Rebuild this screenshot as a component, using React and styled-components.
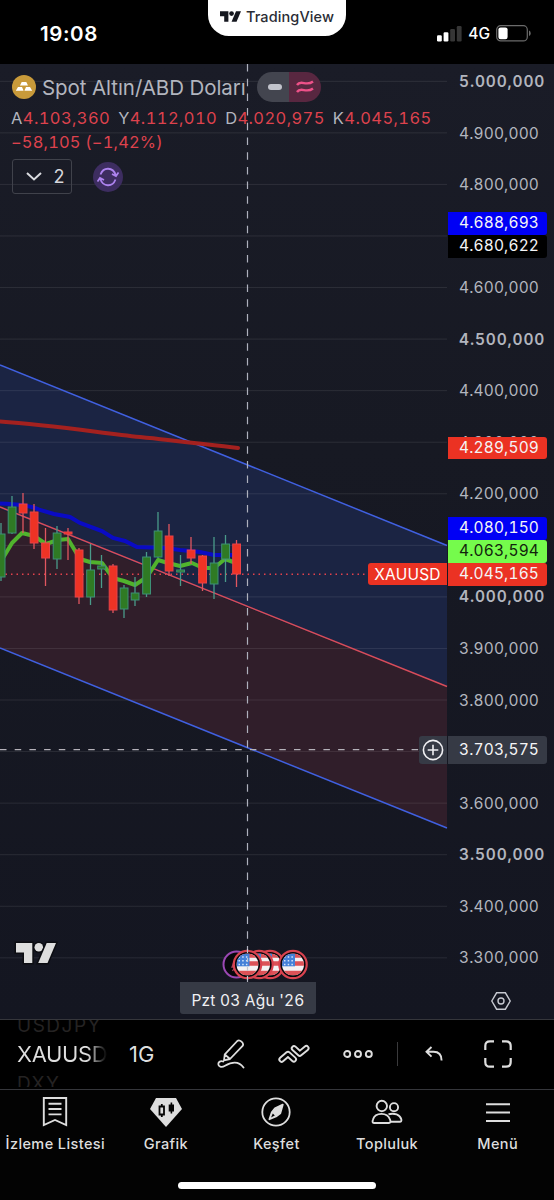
import React from 'react';
import styled, { createGlobalStyle } from 'styled-components';

const GlobalStyle = createGlobalStyle`
  * {
    box-sizing: border-box;
  }

  body {
    margin: 0;
    background: #000;
    font-family: Inter, 'Liberation Sans', sans-serif;
    overflow: hidden;
  }

  svg {
    display: block;
    flex: none;
  }
`;

const STEP = 51.56;

// an empty row is one whose label is fully hidden by price tags
const PRICES = [
    '5.000,000', '4.900,000', '4.800,000', '', '4.600,000', '4.500,000',
    '4.400,000', '4.300,000', '4.200,000', '', '4.000,000', '3.900,000',
    '3.800,000', '', '3.600,000', '3.500,000', '3.400,000', '3.300,000',
];

const BOLD_PRICES = ['5.000,000', '4.500,000', '4.000,000', '3.500,000'];

const TAGS = [
    { text: '4.688,693', top: 148, color: '#0000f5' },
    { text: '4.680,622', top: 171, color: '#000' },
    { text: '4.289,509', top: 372.5, color: '#eb3223' },
    { text: '4.080,150', top: 453, color: '#0000f5' },
    { text: '4.063,594', top: 476, color: '#75fb4c', ink: '#12240c' },
    { text: '4.045,165', top: 499, color: '#eb3223' },
];

// x, high, body top, body bottom, low, rising
const CANDLES = [
    [1, 523, 534, 577, 581, 1],
    [12, 496, 507, 533, 534, 1],
    [23, 493, 504, 513, 533, 0],
    [34, 504, 512, 543, 549, 0],
    [45.5, 528, 543, 558, 586, 0],
    [57, 526, 533, 559, 569, 1],
    [68, 528, 532, 534, 560, 0],
    [79, 548, 550, 597, 604, 0],
    [90.5, 544, 570, 597, 605, 1],
    [101.5, 555, 566, 569, 588, 1],
    [113, 564, 566, 610, 613, 0],
    [124, 585, 588, 609, 618, 1],
    [135, 577, 593, 600, 606, 1],
    [146.5, 552, 557, 594, 597, 1],
    [158, 512, 531, 557, 558, 1],
    [169, 524, 536, 571, 576, 0],
    [180.5, 555, 570, 572, 586, 1],
    [191, 537, 550, 558, 564, 0],
    [202.5, 555, 556, 583, 591, 0],
    [214, 537, 563, 584, 599, 1],
    [225.5, 535, 544, 559, 582, 1],
    [236.5, 540, 544, 574, 587, 0],
];

const Candle = ({ data }) => {
    const [x, high, top, bottom, low, up] = data;
    return (
        <g>
            <path d={`M${x} ${high}V${low}`} stroke={up ? '#4a9b8a' : '#e15660'} strokeWidth="1.3" />
            <rect
                x={x - 3.8}
                y={top}
                width="7.8"
                height={bottom - top}
                fill={up ? '#2f7a24' : '#ee3325'}
                stroke={up ? '#3d9077' : '#e94248'}
            />
        </g>
    );
};

const PlotArea = () => (
    <svg width="448" height="955" viewBox="0 64 448 955">
        <path d="M0 365L447 545V687L0 509Z" fill="#1b2443" />
        <path d="M0 509L447 687V828L0 648Z" fill="#301e2a" />
        {PRICES.map((price, i) => (
            <path key={i} d={`M0 ${81.3 + i * STEP}H447`} stroke="#fff" strokeOpacity="0.09" />
        ))}
        <path d="M0 365L447 545.5" stroke="#4060e0" strokeWidth="1.5" />
        <path d="M0 648L447 828" stroke="#4060e0" strokeWidth="1.5" />
        <path d="M0 507L447 686.5" stroke="#d84c5a" strokeWidth="1.5" />
        <path d="M0 574.2H368" stroke="#e4424c" strokeWidth="1.4" strokeDasharray="1.5 4" />
        <path d="M0 503.5C22 504 34 507 40 510L54 514L70 517L80 523L102 531L113 538L125 541L137 547L165 548L180 550L200 552L214 555H236" fill="none" stroke="#0a0bc4" strokeWidth="4" />
        <path d="M0 563L12 543L22 533L34 536L46 544L58 540L68 539L80 559L90 562L102 563L113 578L124 581L135 585L147 577L158 560L168 563L180 566L192 563L203 568L214 568L225 559L236 563" fill="none" stroke="#50b32d" strokeWidth="4" strokeLinejoin="round" />
        {CANDLES.map((candle) => (
            <Candle key={candle[0]} data={candle} />
        ))}
        <path d="M0 421.5C50 425 95 432 140 437C180 441 210 445 238 448" fill="none" stroke="#a4211f" strokeWidth="4" strokeLinecap="round" />
        <path d="M0 749.7H420" stroke="#b5b2ba" strokeWidth="1.3" strokeDasharray="6.5 8.2" />
        <path d="M247.5 64V982" stroke="#aeb1bd" strokeWidth="1.2" strokeDasharray="7.5 7.2" />
        <g transform="translate(16 943)" fill="#dedede" stroke="#0c0d12" strokeWidth="3" paintOrder="stroke">
            <path d="M0 0H16.3V20H8V9.5H0Z" />
            <circle cx="22.8" cy="4.3" r="4.3" />
            <path d="M30.7 0H40L31.5 20H22.2Z" />
        </g>
    </svg>
);

const Flag = ({ x }) => (
    <g transform={`translate(${x} 15.5)`}>
        <circle r="13.7" fill="#08080c" stroke="#d9434f" strokeWidth="2.2" />
        <g clipPath="url(#flagClip)">
            <rect x="-11" y="-11" width="22" height="22" fill="#f4f2f3" />
            <path d="M-11 -9H11M-11 -1H11M-11 8.5H11" stroke="#dc5257" strokeWidth="4.4" />
            <rect x="-11" y="-11" width="13" height="12.8" fill="#4480d8" />
            <path d="M-9 -7.5H2M-9 -3.8H2M-9 0H2" stroke="#d6e5fa" strokeWidth="1.5" strokeDasharray="1.5 2.2" />
        </g>
    </g>
);

const Events = () => (
    <svg width="88" height="31" viewBox="0 0 88 31">
        <clipPath id="flagClip"><circle r="11" /></clipPath>
        <circle cx="15.5" cy="15.5" r="13" fill="#08080c" stroke="#9a48b3" strokeWidth="2" />
        <path d="M12.5 14L11 18H14L11.5 22" fill="none" stroke="#a8445e" strokeWidth="1.3" />
        <Flag x={49} />
        <Flag x={38} />
        <Flag x={26.5} />
        <Flag x={72} />
        <path d="M26.5 0V31" stroke="#c3c6d0" strokeWidth="1.2" strokeDasharray="4 5" />
    </svg>
);

const App = () => (
    <Screen>
        <GlobalStyle />
        <StatusBar>
            <Clock>19:08</Clock>
            <Island>
                <svg width="21" height="11" viewBox="0 0 40 20" fill="#15171f">
                    <path d="M0 0H16V20H8V9.5H0Z" />
                    <circle cx="22" cy="4.5" r="4.5" />
                    <path d="M30.5 0H40L31.5 20H22Z" />
                </svg>
                TradingView
            </Island>
            <Signal>
                <svg width="25" height="16" viewBox="0 0 25 16" fill="#fff">
                    <rect x="0" y="9.3" width="4.8" height="6.2" rx="1.2" />
                    <rect x="6.6" y="6.3" width="4.8" height="9.2" rx="1.2" />
                    <rect x="13.2" y="3" width="4.8" height="12.5" rx="1.2" fill="#363636" />
                    <rect x="19.8" y="0" width="4.8" height="15.5" rx="1.2" fill="#363636" />
                </svg>
                <span>4G</span>
                <svg width="35" height="17" viewBox="0 0 35 17">
                    <rect x="0.7" y="0.7" width="30.6" height="15.2" rx="4" fill="none" stroke="#6b6b6b" strokeWidth="1.2" />
                    <rect x="2.4" y="2.4" width="9.2" height="11.8" rx="2.2" fill="#fff" />
                    <path d="M33 5.5C35.2 6.3 35.2 10.3 33 11.1Z" fill="#6b6b6b" />
                </svg>
            </Signal>
        </StatusBar>

        <Chart>
            <Plot>
                <PlotArea />
                <Legend>
                    <SymbolRow>
                        <svg width="24" height="24" viewBox="0 0 24 24">
                            <circle cx="12" cy="12" r="12" fill="#c89a3a" />
                            <path d="M9.7 7H14.3L16 10.5H8ZM6 12H10L11.6 15.8H3.8ZM14 12H18L20.2 15.8H12.4Z" fill="#fff" />
                        </svg>
                        <SymbolName>Spot Altın/ABD Doları</SymbolName>
                        <Pills>
                            <Pill $color="#43454f"><Dash /></Pill>
                            <Pill $color="#582740">
                                <svg width="18" height="14" viewBox="0 0 18 14" fill="none" stroke="#ee5189" strokeWidth="2.4">
                                    <path d="M1 5C5 -1 10 7 17 1.5M1 12C5 6 10 14 17 8.5" />
                                </svg>
                            </Pill>
                        </Pills>
                    </SymbolRow>
                    <Quotes>
                        <Quote>A<b>4.103,360</b></Quote>
                        <Quote>Y<b>4.112,010</b></Quote>
                        <Quote>D<b>4.020,975</b></Quote>
                        <Quote>K<b>4.045,165</b></Quote>
                    </Quotes>
                    <Change>−58,105 (−1,42%)</Change>
                    <Controls>
                        <Collapse>
                            <svg width="16" height="9" viewBox="0 0 16 9" fill="none" stroke="#dadbe0" strokeWidth="2">
                                <path d="M1 1L8 7.5L15 1" />
                            </svg>
                            2
                        </Collapse>
                        <Refresh>
                            <svg width="22" height="20" viewBox="0 0 22 20" fill="none" stroke="#ad83ee" strokeWidth="1.8">
                                <path d="M3.5 7.5C6.5 -0.5 16 0 18.7 8M18.5 12.5C15.5 20.5 6 20 3.3 12M15 7L19 9L21.5 5.5M7 13L3 11L0.5 14.5" />
                            </svg>
                        </Refresh>
                    </Controls>
                </Legend>
                <EventStrip><Events /></EventStrip>
                <DateTag>Pzt 03 Ağu '26</DateTag>
                <SymbolTag>XAUUSD</SymbolTag>
                <AddTag>
                    <svg width="22" height="22" viewBox="0 0 22 22" fill="none" stroke="#f0f0f3" strokeWidth="1.6">
                        <circle cx="11" cy="11" r="9.6" />
                        <path d="M11 5.7V16.3M5.7 11H16.3" />
                    </svg>
                </AddTag>
            </Plot>
            <Scale>
                {PRICES.map((price, i) => (
                    <Price key={i} $bold={BOLD_PRICES.includes(price)}>{price}</Price>
                ))}
                {TAGS.map((tag) => (
                    <PriceTag key={tag.text} $top={tag.top} $color={tag.color} $ink={tag.ink}>
                        {tag.text}
                    </PriceTag>
                ))}
                <PriceTag $top={672} $height={28} $color="#363a45">3.703,575</PriceTag>
                <Settings>
                    <svg width="20" height="18" viewBox="0 0 20 18" fill="none" stroke="#c7c9d1" strokeWidth="1.4">
                        <path d="M5.6 0.8H14.4L19.2 9L14.4 17.2H5.6L0.8 9Z" />
                        <circle cx="10" cy="9" r="3" />
                    </svg>
                </Settings>
            </Scale>
        </Chart>

        <Toolbar>
            <Picker>
                <Ghost>USDJPY</Ghost>
                <Current>XAUUSD</Current>
                <Ghost>DXY</Ghost>
            </Picker>
            <Interval>1G</Interval>
            <Tool $width={76}>
                <svg width="28" height="30" viewBox="0 0 28 30" fill="none" stroke="#dedede" strokeWidth="1.8" strokeLinejoin="round" strokeLinecap="round">
                    <path d="M7 21.3L7.8 15.3L20.3 2C22.6 0 27.5 4.2 25.6 6.9L13 20L7 21.3ZM7.8 15.3L13 20M6.2 22.5C3.6 21.6 1.3 22.8 1.3 25C1.3 27.5 4.3 29 8 26.8C14.5 23 21.5 21.5 26.5 28.6" />
                </svg>
            </Tool>
            <Tool $width={50}>
                <svg width="32" height="20" viewBox="0 0 32 20" fill="none" strokeLinejoin="round" strokeLinecap="round">
                    <path d="M3.6 15.5L10 10L15.8 15.3" stroke="#dedede" strokeWidth="6.4" />
                    <path d="M3.6 15.5L10 10L15.8 15.3" stroke="#000" strokeWidth="2.6" />
                    <path d="M16 4.3L21.8 9.6L28.3 4.2" stroke="#dedede" strokeWidth="6.4" />
                    <path d="M16 4.3L21.8 9.6L28.3 4.2" stroke="#000" strokeWidth="2.6" />
                </svg>
            </Tool>
            <Tool $width={78}>
                <svg width="30" height="10" viewBox="0 0 30 10" fill="none" stroke="#dedede" strokeWidth="1.9">
                    <circle cx="4.2" cy="5" r="3" />
                    <circle cx="15" cy="5" r="3" />
                    <circle cx="25.8" cy="5" r="3" />
                </svg>
            </Tool>
            <Separator />
            <Tool $width={71}>
                <svg width="18" height="16" viewBox="0 0 18 16" fill="none" stroke="#dedede" strokeWidth="1.9">
                    <path d="M6.5 1L1.5 5.8L6.5 10.6M1.5 5.8H8.5C14 5.8 16.6 8.3 16.6 14.5" />
                </svg>
            </Tool>
            <Tool $width={58}>
                <svg width="28" height="28" viewBox="0 0 28 28" fill="none" stroke="#dedede" strokeWidth="2.2">
                    <path d="M10 1.3H6Q1.3 1.3 1.3 6V10M18 1.3H22Q26.7 1.3 26.7 6V10M26.7 18V22Q26.7 26.7 22 26.7H18M10 26.7H6Q1.3 26.7 1.3 22V18" />
                </svg>
            </Tool>
        </Toolbar>

        <Nav>
            <NavItem>
                <svg width="28" height="32" viewBox="0 0 28 32" fill="none" stroke="#dedede" strokeWidth="1.9">
                    <path d="M2.8 3H25.2V30L14 25L2.8 30ZM7.5 8.8H20.5M7.5 14H20.5M7.5 19.4H20.5" />
                </svg>
                İzleme Listesi
            </NavItem>
            <NavItem>
                <svg width="32" height="32" viewBox="0 0 32 32">
                    <path d="M6 3H26L32 14L16 32L0 14Z" fill="#dedede" />
                    <path d="M9.5 11.5H14V19.5H9.5ZM11.8 9V11.5M11.8 19.5V22" fill="none" stroke="#050505" strokeWidth="1.8" />
                    <path d="M18.7 9.5H24V16.5H18.7ZM20.6 7.5H22.2V18.5H20.6Z" fill="#050505" />
                </svg>
                Grafik
            </NavItem>
            <NavItem>
                <svg width="32" height="32" viewBox="0 0 32 32" fill="none" stroke="#dedede" strokeWidth="1.8">
                    <circle cx="16" cy="17" r="13.7" />
                    <path d="M22.8 9.6L20.3 18.2L16 21.5L9.4 24.2L11.8 17.4L15 13.2Z" fill="#dedede" strokeLinejoin="round" />
                    <path d="M12.8 18.5L14.8 20.6L11 22.6Z" fill="#030303" stroke="none" />
                </svg>
                Keşfet
            </NavItem>
            <NavItem>
                <svg width="32" height="32" viewBox="0 0 32 32" fill="none" stroke="#dedede" strokeWidth="1.9">
                    <circle cx="10.8" cy="11" r="5.2" />
                    <circle cx="23" cy="12.2" r="4.1" />
                    <path d="M3 28H17.8C19.6 28 19.8 26.5 19 24.5C17.5 20.5 14 18.9 10.5 18.9S3.2 20.5 2 24.5C1.3 26.5 1.3 28 3 28Z" />
                    <path d="M17.5 19.2C23.5 17.8 29 19.6 30.3 24.3C30.7 26 30 26.8 28.8 26.8H20" />
                </svg>
                Topluluk
            </NavItem>
            <NavItem>
                <svg width="26" height="32" viewBox="0 0 26 32" stroke="#dedede" strokeWidth="2">
                    <path d="M1 9.3H25M1 17.6H25M1 25.9H25" />
                </svg>
                Menü
            </NavItem>
        </Nav>
        <HomeArea><HomeBar /></HomeArea>
    </Screen>
);

const Screen = styled.div`
  display: flex;
  flex-direction: column;
  width: 554px;
  height: 1200px;
  background: #000;
  color: #dedede;
`;

const StatusBar = styled.header`
  display: grid;
  grid-template-columns: 208px 138px 1fr;
  height: 64px;
  color: #fff;
`;

const Clock = styled.div`
  padding: 21px 0 0 40px;
  font-size: 20.5px;
  line-height: 26px;
  font-weight: 600;
  letter-spacing: 0.6px;
`;

const Island = styled.div`
  display: flex;
  align-items: center;
  justify-content: center;
  gap: 5px;
  height: 36px;
  padding-bottom: 4px;
  background: #fff;
  border-radius: 0 0 21px 21px;
  color: #2a2c35;
  font-size: 14.5px;
  font-weight: 500;
  letter-spacing: 0.1px;
`;

const Signal = styled.div`
  display: flex;
  justify-content: flex-end;
  align-items: center;
  gap: 6px;
  height: 25px;
  margin-top: 21px;
  padding-right: 23px;
  font-size: 15.5px;
  font-weight: 500;
`;

const Chart = styled.main`
  display: grid;
  grid-template-columns: 448px 106px;
  height: 955px;
  background: linear-gradient(#1a1c27, #171923 40%, #141621);
  font-variant-numeric: tabular-nums;
`;

const Plot = styled.section`
  position: relative;
`;

const Legend = styled.div`
  position: absolute;
  top: 8px;
  left: 12px;
  display: flex;
  flex-direction: column;
  color: #b2b5be;
`;

const SymbolRow = styled.div`
  display: flex;
  align-items: center;
  height: 30px;
  gap: 6px;
`;

const SymbolName = styled.div`
  width: 209px;
  font-size: 20.5px;
  letter-spacing: -0.05px;
  white-space: nowrap;
`;

const Pills = styled.div`
  display: flex;
  border-radius: 15px;
  overflow: hidden;
`;

const Pill = styled.div`
  display: flex;
  align-items: center;
  justify-content: center;
  width: 32px;
  height: 30px;
  background: ${(props) => props.$color};
`;

const Dash = styled.div`
  width: 14px;
  height: 6px;
  margin-left: 3px;
  border-radius: 3px;
  background: #c2c4cc;
`;

const Quotes = styled.div`
  display: flex;
  gap: 8px;
  height: 24px;
  margin: 4px 0 0 -1px;
  font-size: 16.5px;
  line-height: 24px;
`;

const Quote = styled.div`
  letter-spacing: 0.4px;

  b {
    font-weight: 400;
    color: #dd424d;
  }
`;

const Change = styled.div`
  margin-left: -1px;
  font-size: 16.5px;
  line-height: 24px;
  letter-spacing: 0.15px;
  color: #dd424d;
`;

const Controls = styled.div`
  display: flex;
  align-items: center;
  gap: 21px;
  margin-top: 5px;
`;

const Collapse = styled.div`
  display: flex;
  align-items: center;
  justify-content: space-between;
  width: 60px;
  height: 35px;
  padding: 0 6px 0 13px;
  border: 1px solid #40424b;
  border-radius: 3px;
  color: #d5d6db;
  font-size: 18px;
`;

const Refresh = styled.div`
  display: flex;
  align-items: center;
  justify-content: center;
  width: 30px;
  height: 30px;
  border-radius: 50%;
  background: #3d2d60;
`;

const EventStrip = styled.div`
  position: absolute;
  left: 221px;
  top: 885px;
`;

const DateTag = styled.div`
  position: absolute;
  left: 180px;
  top: 918px;
  width: 136px;
  height: 32px;
  border-radius: 0 0 3px 3px;
  background: #363a45;
  color: #f0f0f3;
  font-size: 15.5px;
  line-height: 38px;
  letter-spacing: 0.2px;
  text-align: center;
`;

const SymbolTag = styled.div`
  position: absolute;
  left: 368px;
  top: 499px;
  width: 79px;
  height: 22px;
  border-radius: 3px 0 0 3px;
  background: #eb3223;
  color: #fff;
  font-size: 15.5px;
  line-height: 23px;
  letter-spacing: 0.2px;
  text-align: center;
`;

const AddTag = styled.div`
  position: absolute;
  left: 419px;
  top: 672px;
  display: flex;
  align-items: center;
  justify-content: center;
  width: 28px;
  height: 28px;
  border-radius: 3px 0 0 3px;
  background: #363a45;
`;

const Scale = styled.aside`
  position: relative;
  display: flex;
  flex-direction: column;
  margin-top: -8px;
`;

const Price = styled.div`
  flex: none;
  height: ${STEP}px;
  padding-left: 11px;
  color: #b2b5be;
  font-size: 15.5px;
  font-weight: ${(props) => (props.$bold ? 600 : 400)};
  line-height: 52px;
  letter-spacing: ${(props) => (props.$bold ? 0.85 : 0.15)}px;
`;

const PriceTag = styled.div`
  position: absolute;
  left: 0;
  top: ${(props) => props.$top + 8}px;
  width: 99px;
  height: ${(props) => props.$height || 22.5}px;
  padding-left: 11px;
  border-radius: 0 3px 3px 0;
  background: ${(props) => props.$color};
  color: ${(props) => props.$ink || '#f4f4f6'};
  font-size: 15.5px;
  line-height: ${(props) => props.$height || 22.5}px;
  letter-spacing: 0.15px;
`;

const Settings = styled.div`
  position: absolute;
  left: 43px;
  top: 936px;
`;

const Toolbar = styled.div`
  display: flex;
  align-items: center;
  height: 71px;
  padding-bottom: 2px;
  border-top: 1px solid #35363b;
  border-bottom: 1px solid #35363b;
`;

const Picker = styled.div`
  display: flex;
  flex-direction: column;
  justify-content: center;
  width: 129px;
  height: 67px;
  padding-left: 17px;
  overflow: hidden;
`;

const Current = styled.div`
  flex: none;
  width: 90px;
  height: 34px;
  font-size: 22px;
  line-height: 34px;
  letter-spacing: -0.35px;
  background: linear-gradient(90deg, #dedede 78%, #111 98%);
  background-clip: text;
  color: transparent;
`;

const Ghost = styled.div`
  flex: none;
  height: 24px;
  font-size: 19px;
  line-height: 25px;
  letter-spacing: 1.5px;
  color: #252323;
`;

const Interval = styled.div`
  width: 64px;
  font-size: 22px;
`;

const Tool = styled.div`
  display: flex;
  align-items: center;
  justify-content: center;
  width: ${(props) => props.$width}px;
`;

const Separator = styled.div`
  width: 1px;
  height: 24px;
  background: #3a3a3c;
`;

const Nav = styled.nav`
  display: grid;
  grid-template-columns: repeat(5, 110.6px);
  height: 72px;
  padding-top: 5px;
  background: #030303;
`;

const NavItem = styled.div`
  display: flex;
  flex-direction: column;
  align-items: center;
  gap: 6px;
  font-size: 14.5px;
  line-height: 22px;
  font-weight: 500;
  letter-spacing: 0.4px;
  white-space: nowrap;
`;

const HomeArea = styled.footer`
  display: flex;
  justify-content: center;
  height: 38px;
  padding-top: 20px;
  background: #030303;
`;

const HomeBar = styled.div`
  width: 198px;
  height: 7px;
  border-radius: 4px;
  background: #fff;
`;

export default App;
